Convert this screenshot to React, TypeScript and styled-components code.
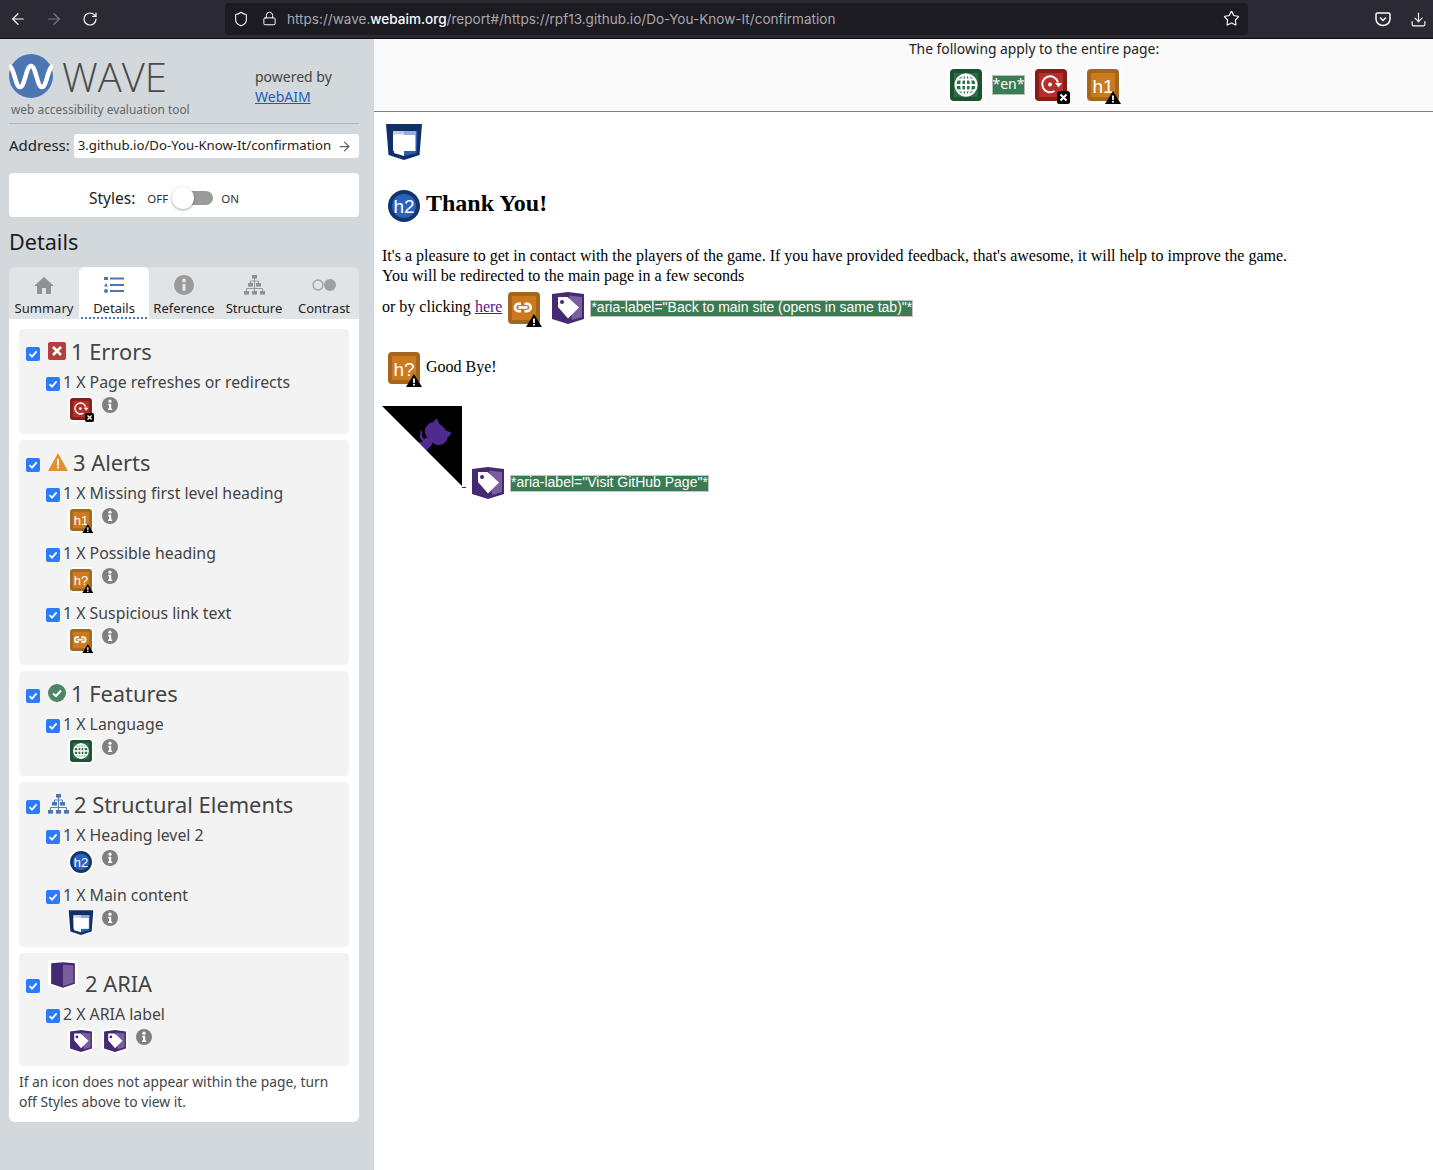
import React from "react";
import styled, { createGlobalStyle } from "styled-components";
import { ArrowLeft, ArrowRight, RotateCw, Shield, Lock, Star, Download } from "lucide-react";

const Global = createGlobalStyle`
  html, body { margin: 0; padding: 0; background: #fff; }
  body { font-family: "Noto Sans", "Open Sans", sans-serif; }
  svg { display: block; flex: none; }
`;

const Page = styled.div`
  width: 1433px;
  height: 1170px;
  overflow: hidden;
  display: flex;
  flex-direction: column;
`;

const BrowserBar = styled.div`
  height: 38px;
  flex: none;
  background: #2b2a33;
  border-bottom: 1px solid #0c0c0d;
  display: flex;
  align-items: center;
  color: #fbfbfe;
`;

const NavButton = styled.span<{ $w: number; $dim?: boolean }>`
  width: ${(p) => p.$w}px;
  flex: none;
  display: flex;
  justify-content: center;
  color: ${(p) => (p.$dim ? "#76757c" : "#fbfbfe")};
`;

const UrlField = styled.div`
  width: 1023px;
  flex: none;
  height: 32px;
  margin: -1px 127px 0 117px;
  background: #1c1b22;
  border-radius: 4px;
  display: flex;
  align-items: center;
  padding: 0 8px;
  box-sizing: border-box;
`;

const LockSlot = styled.span`
  margin-left: 13px;
`;

const UrlText = styled.span`
  font-family: Inter, sans-serif;
  font-size: 13.55px;
  color: #a9a9ae;
  margin-left: 10px;
  flex: 1;
  white-space: nowrap;
  b { color: #fbfbfe; font-weight: 500; }
`;

const Body = styled.div`
  flex: 1;
  display: flex;
  min-height: 0;
`;

const Sidebar = styled.aside`
  width: 374px;
  flex: none;
  box-sizing: border-box;
  background: #d3d8dc;
  padding: 15px 15px 0 9px;
  color: #222;
`;

const Brand = styled.div`
  height: 69px;
  border-bottom: 1px solid #b4b8bc;
  display: flex;
  justify-content: space-between;
`;

const LogoColumn = styled.div`
  display: flex;
  flex-direction: column;
`;

const LogoRow = styled.div`
  display: flex;
  align-items: center;
  height: 44px;
  gap: 9px;
`;

const LogoWord = styled.span`
  font-family: "Open Sans", sans-serif;
  font-weight: 300;
  font-size: 40px;
  line-height: 38px;
  color: #4a4a4a;
  margin-top: 2px;
`;

const Tagline = styled.span`
  font-size: 11.9px;
  line-height: 16px;
  margin: 3px 0 0 2px;
  color: #666;
`;

const Powered = styled.div`
  width: 104px;
  font-size: 14px;
  line-height: 20px;
  color: #444;
  padding-top: 13px;
  a { color: #1a5bc4; text-decoration: underline; }
`;

const AddressRow = styled.div`
  display: flex;
  align-items: center;
  margin-top: 10px;
  height: 24px;
  font-size: 15px;
  gap: 4px;
`;

const AddressLabel = styled.span`
  margin-top: -2px;
`;

const AddressField = styled.div`
  width: 285px;
  height: 24px;
  background: #fff;
  border-radius: 3px;
  box-sizing: border-box;
  display: flex;
  align-items: center;
  padding: 0 7px 0 4px;
  color: #666;
`;

const AddressText = styled.div`
  flex: 1;
  margin-top: -2px;
  font-size: 13.2px;
  color: #222;
  white-space: nowrap;
`;

const StylesCard = styled.div`
  margin-top: 15px;
  height: 44px;
  background: #fff;
  border-radius: 4px;
  display: flex;
  align-items: center;
  padding: 6px 0 0 80px;
  box-sizing: border-box;
  font-size: 15.5px;
`;

const ToggleLabel = styled.span<{ $first?: boolean }>`
  font-size: 11.5px;
  margin-left: ${(p) => (p.$first ? 12 : 0)}px;
  color: #333;
`;

const Toggle = styled.span`
  position: relative;
  width: 41px;
  height: 14px;
  margin: 0 8px 0 4px;
  display: block;
  &::before {
    content: "";
    position: absolute;
    left: 12px;
    right: 0;
    top: 0;
    bottom: 0;
    border-radius: 7px;
    background: #9b9b9b;
  }
  &::after {
    content: "";
    position: absolute;
    left: 0;
    top: -4px;
    width: 22px;
    height: 22px;
    border-radius: 50%;
    background: #fff;
    box-shadow: 0 1px 3px rgba(0, 0, 0, 0.35);
  }
`;

const DetailsTitle = styled.h2`
  margin: 10px 0 11px;
  font-size: 21.6px;
  line-height: 29px;
  font-weight: 400;
  color: #1c1c1c;
`;

const Tabs = styled.div`
  display: flex;
  height: 52px;
  background: #e1e4e7;
  border-radius: 6px 6px 0 0;
`;

const Tab = styled.div<{ $active?: boolean }>`
  width: 70px;
  box-sizing: border-box;
  display: flex;
  flex-direction: column;
  align-items: center;
  padding-top: 7px;
  font-size: 13px;
  color: #222;
  background: ${(p) => (p.$active ? "#fff" : "transparent")};
  border-radius: 6px 6px 0 0;
  svg { height: 22px; }
  span {
    display: block;
    margin-top: 4px;
    line-height: 16px;
    width: 66px;
    text-align: center;
    white-space: nowrap;
    height: 19px;
    border-bottom: ${(p) => (p.$active ? "2px dotted #4c75b3" : "none")};
  }
`;

const Panel = styled.div`
  background: #fff;
  border-radius: 0 0 6px 6px;
  padding: 10px 10px 0;
  display: flex;
  flex-direction: column;
  gap: 6px;
`;

const Card = styled.section`
  background: #f3f3f3;
  border-radius: 5px;
  padding: 8px 7px 7px;
`;

const GroupHead = styled.div<{ $h?: number }>`
  display: flex;
  align-items: center;
  height: ${(p) => p.$h ?? 30}px;
  font-size: 21.85px;
  color: #444;
  white-space: nowrap;
`;

const GroupTitle = styled.span<{ $drop?: number }>`
  margin-top: ${(p) => p.$drop ?? -2}px;
`;

const Box = styled.span<{ $drop?: number }>`
  width: 14px;
  height: 14px;
  flex: none;
  border-radius: 2px;
  background: #2b7bff;
  display: flex;
  align-items: center;
  justify-content: center;
  margin-top: ${(p) => p.$drop ?? 4}px;
`;

const GroupIcon = styled.span<{ $w: number; $gap: number; $up?: number }>`
  width: ${(p) => p.$w}px;
  margin-left: 8px;
  margin-right: ${(p) => p.$gap}px;
  margin-top: -${(p) => p.$up ?? 2}px;
  display: flex;
`;

const ItemLine = styled.div`
  display: flex;
  align-items: center;
  height: 30px;
  padding-left: 20px;
  font-size: 15.85px;
  color: #444;
  gap: 3px;
  white-space: nowrap;
`;

const ItemIcons = styled.div`
  display: flex;
  height: 30px;
  padding-left: 42px;
  gap: 8px;
  align-items: flex-start;
  > svg:not(:last-child) { margin-top: -1px; }
`;

const Info = styled.svg`
  width: 16px;
  height: 16px;
`;

const Hint = styled.p`
  margin: 0;
  font-size: 13.8px;
  line-height: 20px;
  color: #444;
  padding-bottom: 10px;
`;

const Main = styled.main`
  flex: 1;
  min-width: 0;
  font-family: "Liberation Serif", serif;
  font-size: 16px;
  color: #000;
`;

const SummaryStrip = styled.div`
  height: 73px;
  box-sizing: border-box;
  background: #fafafa;
  border-bottom: 1px solid #808080;
  padding-left: 261px;
  display: flex;
  flex-direction: column;
  align-items: center;
  font-family: "Noto Sans", sans-serif;
  font-size: 13.85px;
  line-height: 20px;
  color: #222;
`;

const StripIcons = styled.div`
  display: flex;
  align-items: center;
  margin-top: 7px;
`;

const EnLabel = styled.span`
  width: 33px;
  height: 20px;
  margin: 0 7px;
  box-sizing: border-box;
  background: #3a7b53;
  border: 1px solid #bbb;
  color: #fff;
  font-size: 14px;
  line-height: 15px;
  text-align: center;
`;

const Spacer = styled.span<{ $w: number }>`
  width: ${(p) => p.$w}px;
  flex: none;
`;

const Content = styled.div`
  padding: 10px 0 0 8px;
`;

const MainIconWrap = styled.div`
  padding-left: 3px;
  height: 38px;
`;

const HeadingRow = styled.div`
  display: flex;
  align-items: center;
  margin-top: 28px;
  padding-left: 3px;
  height: 36px;
  gap: 3px;
`;

const ThankYou = styled.h2`
  margin: -6px 0 0;
  font-size: 24px;
  font-weight: 700;
`;

const Para = styled.p`
  margin: 22px 0 0;
  line-height: 20px;
  white-space: nowrap;
`;

const ClickRow = styled.div`
  display: flex;
  align-items: center;
  margin-top: 4px;
  height: 36px;
  a { color: #551a8b; text-decoration: underline; }
`;

const ClickText = styled.span`
  margin-top: -2px;
`;

const AriaLabel = styled.span<{ $w: number }>`
  width: ${(p) => p.$w}px;
  box-sizing: border-box;
  height: 17px;
  background: #3a7b53;
  border: 1px solid #c4c4c4;
  color: #fff;
  font-family: "Liberation Sans", sans-serif;
  font-size: 14px;
  line-height: 12px;
  white-space: nowrap;
  overflow: hidden;
`;

const ByeRow = styled.div`
  display: flex;
  align-items: center;
  margin-top: 24px;
  padding-left: 3px;
  height: 36px;
  gap: 3px;
  span { margin-top: -2px; }
`;

const CornerRow = styled.div`
  display: flex;
  align-items: flex-end;
  margin-top: 20px;
`;

const CornerTick = styled.span`
  width: 4px;
  height: 1px;
  background: #551a8b;
  margin: 0 3px -2px 0;
`;

const CornerLabelWrap = styled.span`
  display: flex;
  align-items: center;
  height: 38px;
  margin-bottom: -16px;
`;

type Tone = "red" | "orange" | "green";
const tones: Record<Tone, [string, string]> = {
  red: ["#8a1c16", "#b5302a"],
  orange: ["#a4661c", "#cb7a20"],
  green: ["#1b5230", "#2f6f47"],
};

// icons are all drawn on a 32 unit tile with 3 units of room for halo and badge
const Frame = ({ size, children }: { size: number; children: React.ReactNode }) => (
  <svg width={size} height={size} viewBox="-3 -3 38 38">
    {children}
  </svg>
);

const WarnBadge = () => (
  <g>
    <path d="M18 35 L26 22 L34 35 Z" fill="#000" />
    <rect x="25.1" y="26.5" width="1.8" height="4.4" fill="#fff" />
    <rect x="25.1" y="31.8" width="1.8" height="1.8" fill="#fff" />
  </g>
);

const CrossBadge = () => (
  <g>
    <rect x="22" y="22" width="13" height="13" rx="2.5" fill="#000" />
    <path d="M25.5 25.5 L31.5 31.5 M31.5 25.5 L25.5 31.5" stroke="#fff" strokeWidth="2" />
  </g>
);

const Tile = ({ tone }: { tone: Tone }) => (
  <>
    <rect x="-3" y="-3" width="38" height="38" rx="7" fill="#fff" />
    <rect x="0" y="0" width="32" height="32" rx="4" fill={tones[tone][0]} />
    <rect x="4" y="4" width="24" height="24" fill={tones[tone][1]} />
  </>
);

const HeadingIcon = ({ size, label }: { size: number; label: string }) => (
  <Frame size={size}>
    <Tile tone="orange" />
    <text x="16" y="23.5" fontFamily="Liberation Sans, sans-serif" fontSize="19" fill="#fff" textAnchor="middle">{label}</text>
    <WarnBadge />
  </Frame>
);

const LinkIcon = ({ size }: { size: number }) => (
  <Frame size={size}>
    <Tile tone="orange" />
    <g fill="none" stroke="#fff" strokeWidth="2.6">
      <path d="M13 11.8 H10.7 a3.7 3.7 0 0 0 0 7.4 H13" />
      <path d="M16.5 11.8 H19 a3.7 3.7 0 0 1 0 7.4 H16.5" />
      <path d="M10.5 15.5 H19.5" />
    </g>
    <WarnBadge />
  </Frame>
);

const RefreshIcon = ({ size }: { size: number }) => (
  <Frame size={size}>
    <Tile tone="red" />
    <path d="M19.5 22 A8 8 0 1 1 23 13.5" fill="none" stroke="#fff" strokeWidth="2" />
    <path d="M20 14 H27 L23.5 18.5 Z" fill="#fff" />
    <circle cx="15" cy="15.5" r="2" fill="#fff" />
    <CrossBadge />
  </Frame>
);

const GlobeIcon = ({ size }: { size: number }) => (
  <Frame size={size}>
    <Tile tone="green" />
    <g fill="none" stroke="#fff" strokeWidth="2">
      <circle cx="16" cy="16" r="10.5" />
      <ellipse cx="16" cy="16" rx="4.8" ry="10.5" />
      <path d="M16 5.5 V26.5 M5.5 16 H26.5 M7 10.5 H25 M7 21.5 H25" />
    </g>
  </Frame>
);

const H2Icon = ({ size }: { size: number }) => (
  <Frame size={size}>
    <circle cx="16" cy="16" r="19" fill="#fff" />
    <circle cx="16" cy="16" r="16" fill="#12356e" />
    <circle cx="16" cy="16" r="12" fill="#2a62bd" />
    <text x="16" y="23" fontFamily="Liberation Sans, sans-serif" fontSize="19" fill="#fff" textAnchor="middle">h2</text>
  </Frame>
);

const MainIcon = ({ size }: { size: number }) => (
  <Frame size={size}>
    <path d="M-3 -2 H35 L32.5 31 L16 36 L-0.5 31 Z" fill="#fff" />
    <path d="M-2 -1 H34 L31.5 30 L16 35 L0.5 30 Z" fill="#0f2f66" />
    <path d="M16 6 H29.7 L28.5 28 L16 31 Z" fill="#2a5fb5" />
    <path d="M5 6 H16 V31 L6 28 Z" fill="#fff" />
    <rect x="5" y="9.5" width="22.5" height="16.5" fill="#fff" />
    <rect x="5" y="6" width="11" height="3.5" fill="#c5cbd8" />
    <rect x="16" y="6" width="12" height="3.5" fill="#8fb0e0" />
  </Frame>
);

const AriaTagIcon = ({ size }: { size: number }) => (
  <Frame size={size}>
    <path d="M-3 0 L16 -3 L35 0 V29 L16 35 L-3 29 Z" fill="#fff" />
    <path d="M0 2 L16 0 L32 2 V27 L16 32 L0 27 Z" fill="#452a73" />
    <path d="M17 3.5 L30 5 V25 L20 28 Z" fill="#7a5e9e" />
    <path d="M6 5 H15.5 L27 15.5 L16 26.5 L6 15 Z" fill="#fff" />
    <circle cx="10" cy="10" r="2" fill="#452a73" />
  </Frame>
);

const AriaBookIcon = () => (
  <svg width="30" height="30" viewBox="-3 -3 38 38">
    <path d="M-3 -2 L16 -3 L35 -2 V28 L16 35 L-3 28 Z" fill="#fff" />
    <path d="M1 1 L16 0 L31 1 V27 L16 32 L1 27 Z" fill="#452a73" />
    <path d="M16 3 L29 4 V26 L16 30 Z" fill="#7a5e9e" />
  </svg>
);

const InfoIcon = () => (
  <Info viewBox="0 0 16 16">
    <circle cx="8" cy="8" r="8" fill="#808080" />
    <circle cx="8" cy="4.2" r="1.6" fill="#fff" />
    <path d="M6.2 6.8 H9.2 V11.6 H10.2 V13 H6 V11.6 H7 V8.2 H6.2 Z" fill="#fff" />
  </Info>
);

const CheckMark = () => (
  <svg width="10" height="10" viewBox="0 0 10 10">
    <path d="M1.5 5.2 L4 7.6 L8.6 2.4" fill="none" stroke="#fff" strokeWidth="1.8" />
  </svg>
);

const TreeIcon = ({ color, w, h }: { color: string; w: number; h: number }) => (
  <svg width={w} height={h} viewBox="0 0 21 20">
    <path d="M10.5 3 V17 M6.5 10 V6 H14.5 V10 M2.5 17 V13.5 H18.5 V17" fill="none" stroke={color} strokeWidth="0.9" />
    <g fill={color}>
      <rect x="8" y="0" width="5" height="3.6" />
      <rect x="4" y="8" width="5" height="3.6" />
      <rect x="12" y="8" width="5" height="3.6" />
      <rect x="0" y="16" width="5" height="3.6" />
      <rect x="8" y="16" width="5" height="3.6" />
      <rect x="16" y="16" width="5" height="3.6" />
    </g>
  </svg>
);

const ErrorHeadIcon = () => (
  <svg width="18" height="18" viewBox="0 0 18 18">
    <rect width="18" height="18" rx="2" fill="#b0413e" />
    <path d="M5 5 L13 13 M13 5 L5 13" stroke="#fff" strokeWidth="2.6" />
  </svg>
);

const AlertHeadIcon = () => (
  <svg width="20" height="18" viewBox="0 0 20 18">
    <path d="M10 0 L20 18 H0 Z" fill="#e0922f" />
    <rect x="9" y="6" width="2" height="6.5" fill="#fff" />
    <rect x="9" y="13.5" width="2" height="2" fill="#fff" />
  </svg>
);

const FeatureHeadIcon = () => (
  <svg width="18" height="18" viewBox="0 0 18 18">
    <circle cx="9" cy="9" r="9" fill="#4f8566" />
    <path d="M5 9.5 L8 12 L13 6.5" fill="none" stroke="#fff" strokeWidth="2" />
  </svg>
);

const WaveLogo = () => (
  <svg width="44" height="44" viewBox="0 0 44 44">
    <circle cx="22" cy="22" r="22" fill="#4c75b3" />
    <path
      d="M0 13 C5 11 6 33 11 33 C16 33 17 12 22 12 C27 12 28 33 33 33 C38 33 39 11 44 13"
      fill="none"
      stroke="#fff"
      strokeWidth="4.5"
    />
  </svg>
);

const PocketIcon = () => (
  <svg width="16" height="16" viewBox="0 0 16 16" fill="none" stroke="#fbfbfe" strokeWidth="1.5">
    <path d="M2.5 2 H13.5 a1.5 1.5 0 0 1 1.5 1.5 V8 a7 6.5 0 0 1 -14 0 V3.5 A1.5 1.5 0 0 1 2.5 2 Z" />
    <path d="M5 6.5 L8 9.5 L11 6.5" />
  </svg>
);

const Corner = () => (
  <svg width="80" height="80" viewBox="0 0 250 250">
    <path d="M0,0 L115,115 L130,115 L142,142 L250,250 L250,0 Z" fill="#000" />
    <path
      d="M128.3,109.0 C113.8,99.7 119.0,89.6 119.0,89.6 C122.0,82.7 120.5,78.6 120.5,78.6 C119.2,72.0 123.4,76.3 123.4,76.3 C127.3,80.9 125.5,87.3 125.5,87.3 C122.9,97.6 130.6,101.9 134.4,103.2"
      fill="#4f2a8f"
    />
    <path
      d="M115.0,115.0 C114.9,115.1 118.7,116.5 119.8,115.4 L133.7,101.6 C136.9,99.2 139.9,98.4 142.2,98.6 C133.8,88.0 127.5,74.4 143.8,58.0 C148.5,53.4 154.0,51.2 159.7,51.0 C160.3,49.4 163.2,43.6 171.4,40.1 C171.4,40.1 176.1,42.5 178.8,56.2 C183.1,58.6 187.2,61.8 190.9,65.4 C194.5,69.0 197.7,73.2 200.1,77.6 C213.8,80.2 216.3,84.9 216.3,84.9 C212.7,93.1 206.9,96.0 205.4,96.6 C205.1,102.4 203.0,107.8 198.3,112.5 C181.9,128.9 168.3,122.5 157.7,114.1 C157.9,116.9 156.7,120.9 152.7,124.9 L141.0,136.5 C139.8,137.7 141.6,141.9 141.8,141.8 Z"
      fill="#4f2a8f"
    />
  </svg>
);

const Item = ({ label, children }: { label: string; children: React.ReactNode }) => (
  <>
    <ItemLine>
      <Box>
        <CheckMark />
      </Box>
      {label}
    </ItemLine>
    <ItemIcons>
      {children}
      <InfoIcon />
    </ItemIcons>
  </>
);

const Head = (props: {
  icon: React.ReactNode;
  w: number;
  gap: number;
  up?: number;
  h?: number;
  boxDrop?: number;
  titleDrop?: number;
  children: React.ReactNode;
}) => (
  <GroupHead $h={props.h}>
    <Box $drop={props.boxDrop}>
      <CheckMark />
    </Box>
    <GroupIcon $w={props.w} $gap={props.gap} $up={props.up}>
      {props.icon}
    </GroupIcon>
    <GroupTitle $drop={props.titleDrop}>{props.children}</GroupTitle>
  </GroupHead>
);

export default function App() {
  return (
    <Page>
      <Global />
      <BrowserBar>
        <NavButton $w={36}><ArrowLeft size={18} strokeWidth={1.6} /></NavButton>
        <NavButton $w={36} $dim><ArrowRight size={18} strokeWidth={1.6} /></NavButton>
        <NavButton $w={36}><RotateCw size={16} strokeWidth={1.8} /></NavButton>
        <UrlField>
          <Shield size={16} strokeWidth={1.6} />
          <LockSlot><Lock size={15} strokeWidth={1.6} /></LockSlot>
          <UrlText>
            https://wave.<b>webaim.org</b>/report#/https://rpf13.github.io/Do-You-Know-It/confirmation
          </UrlText>
          <Star size={17} strokeWidth={1.6} />
        </UrlField>
        <NavButton $w={16}><PocketIcon /></NavButton>
        <Spacer $w={9} />
        <NavButton $w={36}><Download size={17} strokeWidth={1.6} /></NavButton>
      </BrowserBar>
      <Body>
        <Sidebar>
          <Brand>
            <LogoColumn>
              <LogoRow>
                <WaveLogo />
                <LogoWord>WAVE</LogoWord>
              </LogoRow>
              <Tagline>web accessibility evaluation tool</Tagline>
            </LogoColumn>
            <Powered>
              powered by
              <br />
              <a href="#webaim">WebAIM</a>
            </Powered>
          </Brand>
          <AddressRow>
            <AddressLabel>Address:</AddressLabel>
            <AddressField>
              <AddressText>3.github.io/Do-You-Know-It/confirmation</AddressText>
              <ArrowRight size={15} />
            </AddressField>
          </AddressRow>
          <StylesCard>
            Styles:
            <ToggleLabel $first>OFF</ToggleLabel>
            <Toggle />
            <ToggleLabel>ON</ToggleLabel>
          </StylesCard>
          <DetailsTitle>Details</DetailsTitle>
          <Tabs>
            <Tab>
              <svg width="20" height="22" viewBox="0 0 20 20" fill="#8f9194">
                <path d="M10 2 L20 11 H17 V19 H12 V13 H8 V19 H3 V11 H0 Z" />
              </svg>
              <span>Summary</span>
            </Tab>
            <Tab $active>
              <svg width="20" height="22" viewBox="0 0 20 20" fill="#4c75b3">
                <rect x="0" y="2" width="4" height="3" />
                <path d="M2 8 L4 11.5 H0 Z" />
                <circle cx="2" cy="16" r="2" />
                <rect x="6" y="2.5" width="14" height="2" />
                <rect x="6" y="9" width="14" height="2" />
                <rect x="6" y="15" width="14" height="2" />
              </svg>
              <span>Details</span>
            </Tab>
            <Tab>
              <svg width="20" height="22" viewBox="0 0 20 20">
                <circle cx="10" cy="10" r="10" fill="#9a9a9a" />
                <circle cx="10" cy="5.5" r="2" fill="#e1e4e7" />
                <rect x="8.5" y="9" width="3" height="7" fill="#e1e4e7" />
              </svg>
              <span>Reference</span>
            </Tab>
            <Tab>
              <TreeIcon color="#8f9194" w={21} h={22} />
              <span>Structure</span>
            </Tab>
            <Tab>
              <svg width="26" height="22" viewBox="0 0 26 20">
                <circle cx="7" cy="10" r="5" fill="none" stroke="#a0a0a0" strokeWidth="1.3" />
                <circle cx="19" cy="10" r="6" fill="#a0a0a0" />
              </svg>
              <span>Contrast</span>
            </Tab>
          </Tabs>
          <Panel>
            <Card>
              <Head icon={<ErrorHeadIcon />} w={18} gap={5} up={3}>1 Errors</Head>
              <Item label="1 X Page refreshes or redirects"><RefreshIcon size={26} /></Item>
            </Card>
            <Card>
              <Head icon={<AlertHeadIcon />} w={20} gap={5}>3 Alerts</Head>
              <Item label="1 X Missing first level heading"><HeadingIcon size={26} label="h1" /></Item>
              <Item label="1 X Possible heading"><HeadingIcon size={26} label="h?" /></Item>
              <Item label="1 X Suspicious link text"><LinkIcon size={26} /></Item>
            </Card>
            <Card>
              <Head icon={<FeatureHeadIcon />} w={18} gap={5} up={3}>1 Features</Head>
              <Item label="1 X Language"><GlobeIcon size={26} /></Item>
            </Card>
            <Card>
              <Head icon={<TreeIcon color="#4c75b3" w={21} h={20} />} w={21} gap={5}>2 Structural Elements</Head>
              <Item label="1 X Heading level 2"><H2Icon size={26} /></Item>
              <Item label="1 X Main content"><MainIcon size={26} /></Item>
            </Card>
            <Card>
              <Head icon={<AriaBookIcon />} w={30} gap={7} up={10} h={38} boxDrop={12} titleDrop={6}>2 ARIA</Head>
              <Item label="2 X ARIA label">
                <AriaTagIcon size={26} />
                <AriaTagIcon size={26} />
              </Item>
            </Card>
            <Hint>If an icon does not appear within the page, turn off Styles above to view it.</Hint>
          </Panel>
        </Sidebar>
        <Main>
          <SummaryStrip>
            The following apply to the entire page:
            <StripIcons>
              <GlobeIcon size={38} />
              <EnLabel>*en*</EnLabel>
              <RefreshIcon size={38} />
              <Spacer $w={14} />
              <HeadingIcon size={38} label="h1" />
            </StripIcons>
          </SummaryStrip>
          <Content>
            <MainIconWrap><MainIcon size={38} /></MainIconWrap>
            <HeadingRow>
              <H2Icon size={38} />
              <ThankYou>Thank You!</ThankYou>
            </HeadingRow>
            <Para>
              It's a pleasure to get in contact with the players of the game. If you have provided feedback, that's awesome, it will help to improve the game.
              <br />
              You will be redirected to the main page in a few seconds
            </Para>
            <ClickRow>
              <ClickText>or by clicking <a href="#here">here</a></ClickText>
              <Spacer $w={3} />
              <LinkIcon size={38} />
              <Spacer $w={6} />
              <AriaTagIcon size={38} />
              <Spacer $w={3} />
              <AriaLabel $w={323}>*aria-label="Back to main site (opens in same tab)"*</AriaLabel>
            </ClickRow>
            <ByeRow>
              <HeadingIcon size={38} label="h?" />
              <span>Good Bye!</span>
            </ByeRow>
            <CornerRow>
              <Corner />
              <CornerTick />
              <CornerLabelWrap>
                <AriaTagIcon size={38} />
                <Spacer $w={3} />
                <AriaLabel $w={199}>*aria-label="Visit GitHub Page"*</AriaLabel>
              </CornerLabelWrap>
            </CornerRow>
          </Content>
        </Main>
      </Body>
    </Page>
  );
}
